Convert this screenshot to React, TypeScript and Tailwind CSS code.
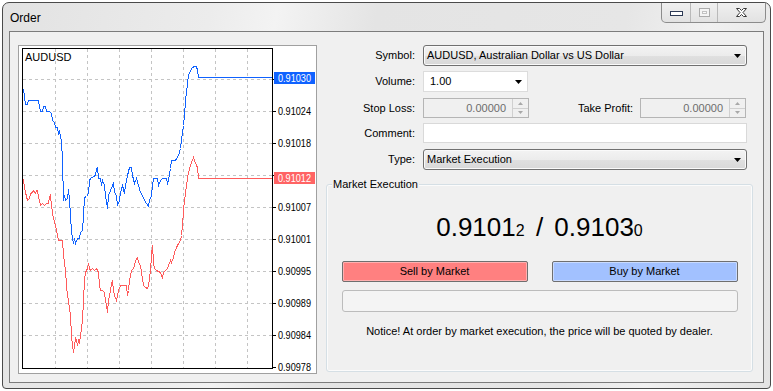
import React from 'react'

type Pt = [number, number]

// ask (blue) and bid (red) price lines, in page pixels
const ask: Pt[] = [
  [22, 89], [23, 89], [24, 96], [25, 104], [27, 104], [28, 100], [33, 100], [38, 100], [39, 106], [40, 111],
  [42, 111], [43, 106], [45, 106], [46, 111], [49, 111], [51, 113], [52, 120], [54, 122], [55, 127], [57, 127],
  [58, 133], [59, 131], [60, 136], [61, 140], [62, 160], [63, 200], [64, 195], [65, 200], [67, 198], [68, 189],
  [69, 200], [70, 215], [71, 232], [72, 237], [73, 243], [74, 238], [75, 243], [77, 238], [79, 238], [80, 232],
  [82, 230], [83, 215], [84, 197], [86, 196], [88, 193], [89, 180], [90, 178], [93, 176], [95, 175], [96, 168],
  [97, 167], [98, 178], [100, 178], [101, 185], [102, 180], [104, 185], [105, 195], [107, 208], [108, 195],
  [110, 190], [112, 185], [113, 183], [114, 192], [116, 195], [117, 205], [119, 200], [120, 192], [122, 185],
  [124, 193], [125, 185], [127, 175], [129, 167], [131, 167], [132, 175], [134, 183], [136, 178], [138, 185],
  [140, 192], [142, 195], [144, 200], [146, 203], [148, 206], [149, 200], [151, 195], [152, 185], [153, 178],
  [157, 178], [158, 185], [160, 180], [162, 178], [166, 178], [167, 183], [168, 180], [169, 174], [170, 168],
  [171, 160], [175, 160], [176, 158], [178, 155], [180, 148], [181, 140], [182, 132], [183, 125], [184, 115],
  [185, 100], [186, 92], [187, 83], [188, 75], [190, 70], [192, 67], [194, 66], [196, 66], [197, 70], [198, 77],
  [272, 77],
]

const bid: Pt[] = [
  [22, 178], [23, 180], [24, 187], [25, 192], [27, 200], [29, 198], [30, 193], [32, 192], [33, 190], [35, 193],
  [36, 190], [37, 190], [38, 197], [39, 200], [40, 205], [42, 203], [44, 205], [46, 203], [48, 203], [49, 197],
  [50, 195], [51, 205], [52, 212], [53, 218], [55, 225], [56, 230], [57, 235], [58, 240], [62, 240], [63, 255],
  [64, 262], [65, 270], [66, 285], [67, 295], [68, 300], [69, 308], [70, 315], [71, 335], [72, 345], [73, 352],
  [74, 345], [75, 338], [76, 340], [77, 345], [78, 340], [79, 343], [80, 335], [81, 328], [82, 320], [83, 300],
  [84, 280], [85, 272], [86, 270], [87, 268], [88, 263], [89, 268], [90, 270], [92, 268], [94, 270], [96, 268],
  [98, 272], [99, 285], [100, 290], [102, 290], [104, 292], [105, 300], [106, 305], [107, 312], [108, 300],
  [110, 290], [111, 283], [112, 280], [113, 290], [114, 295], [116, 300], [117, 295], [118, 290], [120, 285],
  [126, 285], [127, 295], [128, 290], [129, 280], [130, 275], [131, 270], [133, 268], [134, 265], [135, 260],
  [137, 257], [138, 262], [140, 265], [141, 272], [142, 278], [143, 285], [145, 287], [147, 288], [148, 285],
  [150, 270], [151, 255], [152, 245], [153, 262], [154, 268], [156, 270], [160, 272], [161, 275], [162, 278],
  [163, 272], [165, 270], [167, 268], [168, 265], [170, 260], [171, 262], [173, 257], [174, 252], [176, 247],
  [178, 243], [180, 240], [181, 235], [182, 225], [183, 210], [184, 200], [185, 193], [186, 185], [187, 178],
  [188, 172], [190, 165], [191, 162], [193, 157], [194, 160], [196, 165], [197, 167], [198, 178], [272, 178],
]

// grid levels; the 0.91030 and 0.91012 ones sit under the bid/ask tags
const levels = [
  { y: 79, t: '' },
  { y: 111, t: '0.91024' },
  { y: 143, t: '0.91018' },
  { y: 175, t: '' },
  { y: 207, t: '0.91007' },
  { y: 239, t: '0.91001' },
  { y: 271, t: '0.90995' },
  { y: 303, t: '0.90989' },
  { y: 335, t: '0.90984' },
  { y: 367, t: '0.90978' },
]

const gridX = [55, 87, 119, 151, 183, 215, 247]

const toPts = (p: Pt[]) => p.map(([x, y]) => `${x + 0.5},${y + 0.5}`).join(' ')

function Chart() {
  return (
    <svg width={297} height={327} viewBox="19 46 297 327" className="block">
      <rect x={19} y={46} width={297} height={327} fill="#fff" />
      {gridX.map((x) => (
        <line key={x} x1={x + 0.5} y1={49} x2={x + 0.5} y2={368} stroke="#c4c4c4" strokeDasharray="3 3" />
      ))}
      {levels.slice(0, 9).map((l) => (
        <line key={l.y} x1={23} y1={l.y + 0.5} x2={272} y2={l.y + 0.5} stroke="#c4c4c4" strokeDasharray="3 3" />
      ))}
      {levels.map((l) => (
        <g key={l.y}>
          <line x1={273} y1={l.y + 0.5} x2={276} y2={l.y + 0.5} stroke="#000" />
          {l.t && (
            <text x={278} y={l.y + 4} fontSize={10} textLength={33} lengthAdjust="spacingAndGlyphs" fill="#000" fontFamily="Liberation Sans, Arial, sans-serif">
              {l.t}
            </text>
          )}
        </g>
      ))}
      <polyline points={toPts(bid)} fill="none" stroke="#ff5b5b" shapeRendering="crispEdges" />
      <polyline points={toPts(ask)} fill="none" stroke="#0f62ff" shapeRendering="crispEdges" />
      <rect x={22.5} y={48.5} width={250} height={320} fill="none" stroke="#000" />
      <rect x={274} y={72} width={41} height={12} fill="#0f62ff" />
      <text x={278} y={81.5} fontSize={10} textLength={33} lengthAdjust="spacingAndGlyphs" fill="#fff" fontFamily="Liberation Sans, Arial, sans-serif">
        0.91030
      </text>
      <rect x={274} y={172} width={41} height={12} fill="#ff6464" />
      <text x={278} y={181.5} fontSize={10} textLength={33} lengthAdjust="spacingAndGlyphs" fill="#fff" fontFamily="Liberation Sans, Arial, sans-serif">
        0.91012
      </text>
      <text x={25} y={61} fontSize={11} fill="#000" fontFamily="Liberation Sans, Arial, sans-serif">
        AUDUSD
      </text>
    </svg>
  )
}

function Arrow() {
  return (
    <svg width="7" height="4" viewBox="0 0 7 4" className="shrink-0">
      <path d="M0 0h7L3.5 4z" fill="#000" />
    </svg>
  )
}

function Combo({ text, className }: { text: string; className: string }) {
  return (
    <div
      className={`flex items-center h-[21px] rounded-[3px] border border-[#707070] bg-[linear-gradient(#f3f3f3_0%,#ececec_50%,#e0e0e0_51%,#d8d8d8_100%)] shadow-[inset_0_0_0_1px_#fafafa] pl-[3px] pr-[5px] ${className}`}
    >
      <span className="flex-1 leading-[13px]">{text}</span>
      <Arrow />
    </div>
  )
}

function Spin({ value }: { value: string }) {
  return (
    <div className="flex h-[20px] w-[106px] border border-[#b5b5b5] bg-[#f0f0f0]">
      <div className="flex-1 text-right pr-[6px] leading-[18px] text-[#6d6d6d]">{value}</div>
      <div className="w-[16px] flex flex-col border-l border-[#d0d0d0]">
        <div className="flex-1 flex items-center justify-center border-b border-[#d0d0d0]">
          <svg width="5" height="3" viewBox="0 0 5 3">
            <path d="M0 3h5L2.5 0z" fill="#a8a8a8" />
          </svg>
        </div>
        <div className="flex-1 flex items-center justify-center">
          <svg width="5" height="3" viewBox="0 0 5 3">
            <path d="M0 0h5L2.5 3z" fill="#a8a8a8" />
          </svg>
        </div>
      </div>
    </div>
  )
}

function Label({ text }: { text: string }) {
  return <div className="w-[89px] text-right leading-[13px]">{text}</div>
}

function TitleButtons() {
  return (
    <div className="flex h-[20px] mr-[4px] border border-t-0 border-[#8c8c8c] rounded-b-[5px] overflow-hidden bg-[linear-gradient(#f0f0f0,#e2e2e2)]">
      <div className="w-[28px] flex items-start justify-center pt-[8px]">
        <svg width="13" height="5" viewBox="0 0 13 5">
          <rect x="0.5" y="0.5" width="12" height="4" fill="#fff" stroke="#2d3a55" />
        </svg>
      </div>
      <div className="w-[27px] border-l border-[#b9b9b9] flex items-start justify-center pt-[5px]">
        <svg width="11" height="9" viewBox="0 0 11 9">
          <rect x="0.5" y="0.5" width="10" height="8" fill="#f4f4f4" stroke="#ababab" />
          <rect x="3.5" y="3.5" width="4" height="2" fill="#fafafa" stroke="#c2c2c2" />
        </svg>
      </div>
      <div className="w-[48px] border-l border-[#b9b9b9] flex items-start justify-center pt-[5px]">
        <svg width="11" height="9" viewBox="0 0 11 9">
          <polygon
            points="0.5,0.5 3.5,0.5 5.5,2.5 7.5,0.5 10.5,0.5 7,4.5 10.5,8.5 7.5,8.5 5.5,6.5 3.5,8.5 0.5,8.5 4,4.5"
            fill="#fff"
            stroke="#3a3a3a"
          />
        </svg>
      </div>
    </div>
  )
}

export default function App() {
  return (
    <div className="w-[773px] h-[391px] bg-white font-['Liberation_Sans',Arial,sans-serif] text-[11px] text-black overflow-hidden">
      <div className="ml-[2px] mt-[2px] w-[769px] h-[387px] rounded-t-[7px] rounded-b-[4px] border border-[#4a4a4a] flex flex-col bg-[linear-gradient(100deg,#e2e2e2_0%,#ececec_25%,#f3f3f3_33%,#e4e4e4_45%,#e6e6e6_75%,#f1f1f1_85%,#e3e3e3_100%)]">
        <div className="h-[28px] flex items-start">
          <div className="pl-[7px] pt-[8px] text-[12px] leading-[15px]">Order</div>
          <div className="ml-auto">
            <TitleButtons />
          </div>
        </div>

        <div className="mx-[6px] h-[352px] border border-[#7c7c7c] bg-[#f0f0f0] flex items-start">
          <div className="ml-[8px] mt-[13px] w-[299px] h-[329px] border border-[#a0a0a0] bg-white">
            <Chart />
          </div>

          <div className="ml-[9px] mt-[13px] w-[427px] flex flex-col">
            <div className="flex items-center gap-[8px] h-[21px]">
              <Label text="Symbol:" />
              <Combo text="AUDUSD, Australian Dollar vs US Dollar" className="w-[324px]" />
            </div>

            <div className="mt-[5px] flex items-center gap-[8px] h-[21px]">
              <Label text="Volume:" />
              <div className="w-[105px] h-[21px] flex items-center border border-[#dcdcdc] bg-white pl-[6px] pr-[5px]">
                <span className="flex-1 leading-[13px]">1.00</span>
                <Arrow />
              </div>
            </div>

            <div className="mt-[6px] flex items-center h-[20px]">
              <Label text="Stop Loss:" />
              <div className="ml-[8px]">
                <Spin value="0.00000" />
              </div>
              <div className="w-[104px] text-right leading-[13px]">Take Profit:</div>
              <div className="ml-[7px]">
                <Spin value="0.00000" />
              </div>
            </div>

            <div className="mt-[5px] flex items-center gap-[8px] h-[20px]">
              <Label text="Comment:" />
              <div className="w-[324px] h-[20px] border border-[#d9d9d9] bg-white" />
            </div>

            <div className="mt-[6px] flex items-center gap-[8px] h-[21px]">
              <Label text="Type:" />
              <Combo text="Market Execution" className="w-[324px]" />
            </div>

            <div className="mt-[14px] relative w-[427px] h-[188px] rounded-[3px] border border-[#d5dfe5] shadow-[inset_0_0_0_1px_#fbfbfb] flex flex-col items-center">
              <div className="absolute left-[5px] top-[-7px] px-[1px] bg-[#f0f0f0] leading-[13px]">Market Execution</div>

              <div className="mt-[27px] h-[30px] leading-[30px] text-[26px] text-black">
                0.9101<span className="text-[16px]">2</span>
                <span className="mx-[4px]"> / </span>
                0.9103<span className="text-[16px]">0</span>
              </div>

              <div className="mt-[19px] flex gap-[24px]">
                <div className="w-[186px] h-[21px] rounded-[2px] border border-[#6f6f6f] bg-[#ff8080] shadow-[inset_0_0_0_1px_#ffb0b0] flex items-center justify-center leading-[13px]">
                  Sell by Market
                </div>
                <div className="w-[186px] h-[21px] rounded-[2px] border border-[#6f6f6f] bg-[#a2c1ff] shadow-[inset_0_0_0_1px_#c9dbff] flex items-center justify-center leading-[13px]">
                  Buy by Market
                </div>
              </div>

              <div className="mt-[8px] w-[396px] h-[22px] rounded-[3px] border border-[#bcbcbc] bg-[#f4f4f4]" />

              <div className="mt-[13px] leading-[13px]">
                Notice! At order by market execution, the price will be quoted by dealer.
              </div>
            </div>
          </div>
        </div>
      </div>
    </div>
  )
}
